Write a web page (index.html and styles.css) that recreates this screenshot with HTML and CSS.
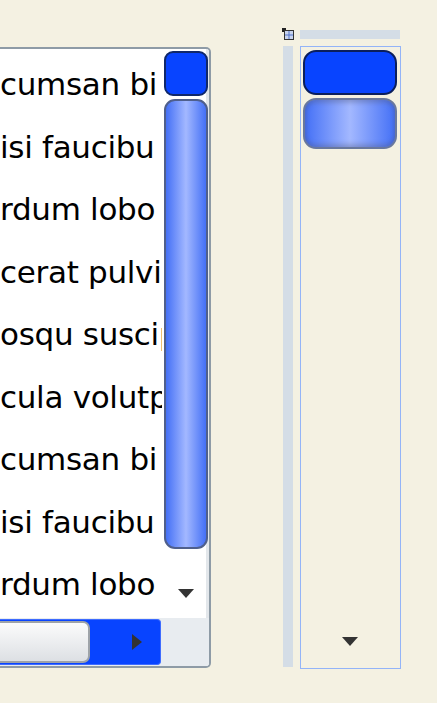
FILE: index.html
```html
<!DOCTYPE html>
<html lang="en">
<head>
    <meta charset="UTF-8">
    <meta name="viewport" content="width=device-width, initial-scale=1.0">
    <title>List Scroll</title>
    <link rel="stylesheet" href="styles.css">
</head>
<body>
    <div class="listbox">
        <div class="items">
            <div class="item">cumsan bi</div>
            <div class="item">isi faucibu</div>
            <div class="item">rdum lobo</div>
            <div class="item">cerat pulvi</div>
            <div class="item">osqu suscip</div>
            <div class="item">cula volutp</div>
            <div class="item">cumsan bi</div>
            <div class="item">isi faucibu</div>
            <div class="item">rdum lobo</div>
        </div>
        <div class="vscroll">
            <div class="btn-up"></div>
            <div class="vthumb"></div>
            <div class="track">
                <span class="arrow-down"></span>
            </div>
        </div>
        <div class="hscroll">
            <div class="hbar">
                <div class="hthumb"></div>
                <span class="arrow-right"></span>
            </div>
        </div>
        <div class="corner"></div>
    </div>

    <div class="side">
        <svg class="tree-icon" width="12" height="12" viewBox="0 0 12 12">
            <rect x="0" y="0" width="4" height="4" fill="#222"/>
            <rect x="2.5" y="2.5" width="9" height="9" fill="#c8d4ee" stroke="#333" stroke-width="1"/>
            <path d="M7 3v8M3 7h8" stroke="#5577cc" stroke-width="1"/>
        </svg>
        <div class="top-bar"></div>
        <div class="side-bar"></div>
        <div class="side-box">
            <div class="side-btn"></div>
            <div class="side-thumb"></div>
            <span class="arrow-down side-arrow"></span>
        </div>
    </div>
</body>
</html>
```

FILE: styles.css
```css
body {
    margin: 0;
    padding: 0;
    background-color: #f4f1e2;
    font-family: "DejaVu Sans", Verdana, sans-serif;
    display: flex;
    align-items: flex-start;
    height: 703px;
    overflow: hidden;
}
.listbox {
    margin-top: 47px;
    width: 209px;
    height: 617px;
    border: 2px solid #8e9ba6;
    border-left: none;
    border-radius: 0 5px 5px 0;
    background-color: #fff;
    display: grid;
    grid-template-columns: 162px 47px;
    grid-template-rows: 569px 48px;
    overflow: hidden;
}
.items {
    overflow: hidden;
    padding-top: 4px;
}
.item {
    height: 62.5px;
    line-height: 62.5px;
    font-size: 31px;
    letter-spacing: -0.3px;
    white-space: nowrap;
    overflow: hidden;
    color: #000;
}
.vscroll {
    display: flex;
    flex-direction: column;
    padding: 2px 1px 0 2px;
    background: linear-gradient(to right, #fff 44px, #e3e7eb 44px);
}
.btn-up {
    height: 41px;
    background-color: #0844ff;
    border: 2px solid #10286a;
    border-radius: 9px;
}
.vthumb {
    margin-top: 3px;
    height: 446px;
    border: 2px solid #4f5f8c;
    border-radius: 11px;
    background: linear-gradient(to right, #4470f6, #a3b8ff 50%, #4470f6);
}
.track {
    flex: 1;
    display: flex;
    justify-content: center;
    align-items: flex-end;
    padding-bottom: 20px;
}
.arrow-down {
    width: 0;
    height: 0;
    border-left: 8px solid transparent;
    border-right: 8px solid transparent;
    border-top: 9px solid #333;
}
.hscroll {
    padding: 1px 1px 1px 0;
    background-color: #e8ecf0;
}
.hbar {
    height: 44px;
    border: 1px solid #3e6cff;
    border-left: none;
    border-radius: 0 4px 4px 0;
    background-color: #0844ff;
    display: flex;
    align-items: center;
}
.hthumb {
    width: 88px;
    height: 38px;
    border: 2px solid #9ea3a8;
    border-left: none;
    border-radius: 0 7px 7px 0;
    background: linear-gradient(#fbfbfb, #dde0e4);
}
.arrow-right {
    margin-left: 42px;
    width: 0;
    height: 0;
    border-top: 8px solid transparent;
    border-bottom: 8px solid transparent;
    border-left: 10px solid #333;
}
.corner {
    background-color: #e8ecf0;
}
.side {
    margin-left: 71px;
    margin-top: 28px;
    display: grid;
    grid-template-columns: 11px 101px;
    grid-template-rows: 12px 623px;
    column-gap: 7px;
    row-gap: 6px;
}
.tree-icon {
    display: block;
}
.top-bar {
    margin-top: 2px;
    height: 9px;
    width: 100px;
    background-color: #d4dde6;
}
.side-bar {
    margin-left: 1px;
    width: 10px;
    height: 621px;
    background-color: #d4dde6;
}
.side-box {
    border: 1px solid #93b4f8;
    display: flex;
    flex-direction: column;
    align-items: center;
    padding: 3px 3px 0 2px;
}
.side-btn {
    width: 90px;
    height: 41px;
    background-color: #0844ff;
    border: 2px solid #0b1f5c;
    border-radius: 13px;
}
.side-thumb {
    margin-top: 3px;
    width: 90px;
    height: 47px;
    border: 2px solid #69789e;
    border-radius: 13px;
    background: linear-gradient(to right, #4470f6, #a3b8ff 50%, #4470f6);
    box-shadow: inset 0 3px 4px rgba(80, 90, 130, 0.35), inset 0 -3px 4px rgba(80, 90, 130, 0.35);
}
.side-arrow {
    margin-top: auto;
    margin-bottom: 22px;
}
```
